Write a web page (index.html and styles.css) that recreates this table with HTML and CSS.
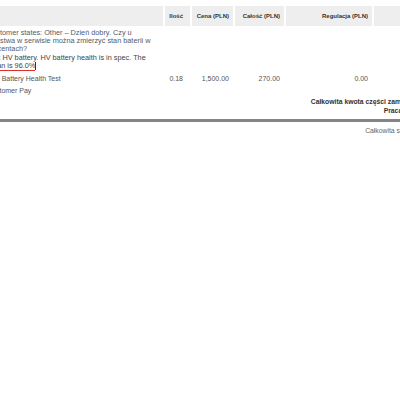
FILE: index.html
```html
<!DOCTYPE html>
<html lang="pl">
<head>
<meta charset="utf-8">
<link rel="stylesheet" href="styles.css">
</head>
<body>
<div class="sheet">
  <div class="grid head">
    <div class="th"></div>
    <div class="th qty">Ilość</div>
    <div class="th">Cena (PLN)</div>
    <div class="th">Całość (PLN)</div>
    <div class="th">Regulacja (PLN)</div>
    <div class="th">Razem (PLN)</div>
  </div>

  <div class="grid">
    <div class="desc notes">
      <p class="note">Customer states: Other – Dzień dobry. Czy u<br>Państwa w serwisie można zmierzyć stan baterii w<br>procentach?</p>
      <p class="tech">Test HV battery. HV battery health is in spec. The<br><span class="mark">mean is 96.0%</span><span class="caret"></span></p>
    </div>
  </div>

  <div class="grid item">
    <div class="desc op">HV Battery Health Test</div>
    <div class="td qty">0.18</div>
    <div class="td">1,500.00</div>
    <div class="td">270.00</div>
    <div class="td">0.00</div>
    <div class="td last">270.00</div>
  </div>

  <div class="pay">Customer Pay</div>

  <div class="totals">
    <div class="label">Całkowita kwota części zamiennych:</div>
    <div class="label">Praca łącznie:</div>
  </div>

  <div class="rule"></div>

  <div class="grand">Całkowita suma netto:</div>
</div>
</body>
</html>
```

FILE: styles.css
```css
html, body {
  margin: 0;
  padding: 0;
  overflow: hidden;
  background: #ffffff;
}

.sheet {
  margin-left: -13px;
  width: 470px;
  font-family: "Liberation Sans", Arial, sans-serif;
  color: #555555;
  font-size: 7px;
}

.grid {
  display: grid;
  grid-template-columns: 176px 25px 41px 49px 86px 70px;
  column-gap: 2px;
}

.head {
  margin-top: 6px;
  height: 20px;
}

.th {
  background: #eeeeee;
  color: #333333;
  font-weight: bold;
  font-size: 6px;
  display: flex;
  align-items: center;
  justify-content: flex-end;
  padding-right: 4px;
  white-space: nowrap;
}

.th.qty {
  padding-right: 7px;
}

.notes {
  padding-top: 3px;
  font-size: 7.3px;
  white-space: nowrap;
}

.note,
.tech {
  margin: 0;
  line-height: 7.9px;
}

.note {
  color: #4f5d6d;
}

.tech {
  color: #444444;
  margin-top: 1.3px;
}

.mark {
  border-bottom: 1px solid #e0302a;
}

.caret {
  display: inline-block;
  width: 0;
  height: 8px;
  border-right: 1px solid #333333;
  vertical-align: -2px;
}

.item {
  margin-top: 3px;
  line-height: 12px;
}

.op {
  padding-left: 3px;
}

.td {
  text-align: right;
  padding-right: 4px;
}

.td.qty {
  padding-right: 7px;
}

.td.last {
  padding-right: 13px;
}

.pay {
  line-height: 12px;
}

.totals {
  margin-top: 0;
  padding-right: 28px;
  text-align: right;
  font-weight: bold;
  font-size: 6.8px;
  color: #333333;
  line-height: 9px;
}

.rule {
  margin-top: 4px;
  height: 3px;
  background: #858585;
}

.grand {
  margin-top: 5px;
  padding-right: 25px;
  text-align: right;
  font-size: 6.8px;
  color: #666666;
}
```
